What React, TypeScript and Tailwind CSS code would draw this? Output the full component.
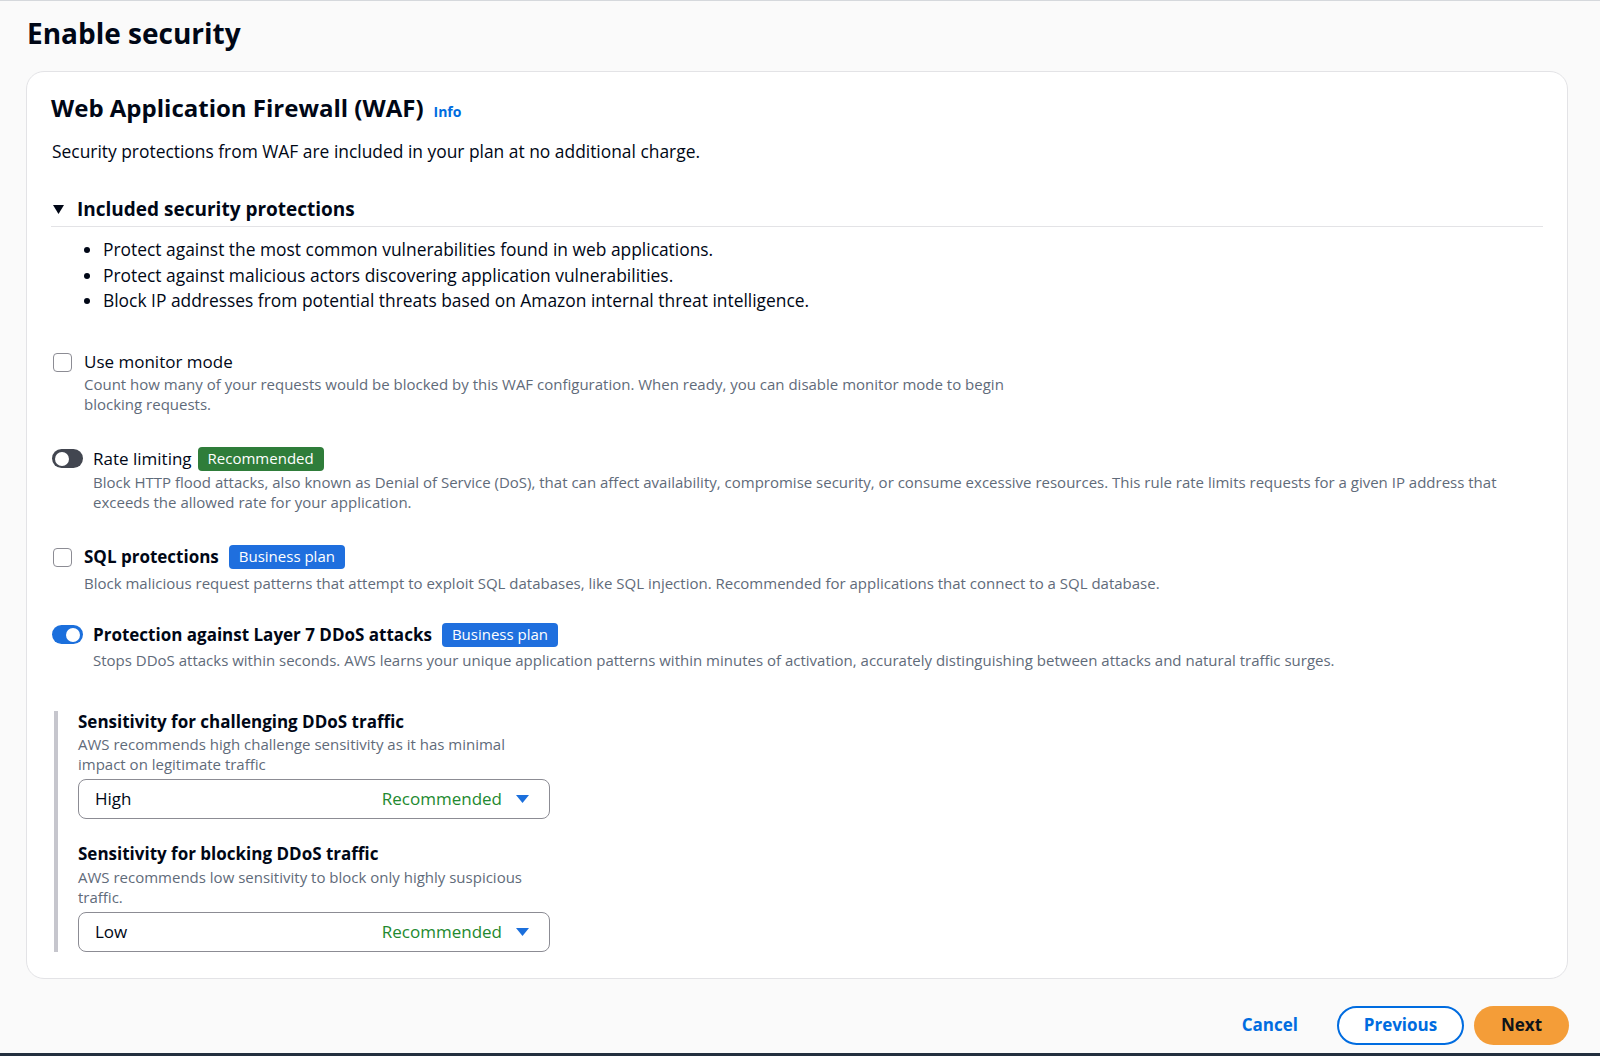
import { ReactNode } from 'react';

const font = { fontFamily: '"Open Sans", "Noto Sans", Arial, sans-serif' };

const Checkbox = () => (
    <span className="mt-[2px] w-[19px] h-[19px] flex-shrink-0 rounded-[4px] border-[1.5px] border-[#8c8c94] bg-white" />
);

const Toggle = ({ on }: { on?: boolean }) => (
    <span
        className={`w-[31px] h-[19px] flex-shrink-0 rounded-full flex items-center px-[3px] ${on ? 'bg-[#1b6fdc] justify-end' : 'bg-[#424650] justify-start'}`}
    >
        <span className="w-[14px] h-[14px] rounded-full bg-white" />
    </span>
);

const Badge = ({ children, color }: { children: ReactNode; color: 'green' | 'blue' }) => (
    <span
        className={`inline-flex items-center h-[24px] px-[10px] rounded-[4px] text-white text-[15px] font-normal leading-none ${color === 'green' ? 'bg-[#2f7d3a]' : 'bg-[#1f6fde]'}`}
    >
        {children}
    </span>
);

const Caret = () => (
    <svg width="15" height="10" viewBox="0 0 15 10">
        <path d="M1 1h13l-6.5 8z" fill="#1b6fdc" />
    </svg>
);

const SelectBox = ({ value }: { value: string }) => (
    <div className="mt-[5px] w-[472px] h-[40px] rounded-[8px] border border-[#8c8c94] bg-white flex items-center pl-[16px] pr-[19px]">
        <span className="text-[17px] text-[#000716]">{value}</span>
        <span className="ml-auto text-[17px] text-[#22892f]">Recommended</span>
        <span className="ml-[13px] flex items-center"><Caret /></span>
    </div>
);

export default function App() {
    return (
        <div className="min-h-screen w-full bg-[#fafafa] border-t border-[#d5d8dc] text-[#000716] flex flex-col" style={font}>
            {/* Page title */}
            <h1 className="ml-[27px] mt-[13px] text-[28px] leading-[38px] font-bold">Enable security</h1>

            {/* WAF card */}
            <div className="ml-[26px] mr-[32px] mt-[19px] bg-white border border-[#e3e3e6] rounded-[18px] px-[24px] pt-[19px] pb-[26px]">
                <div className="flex items-baseline gap-[10px]">
                    <h2 className="text-[24px] leading-[34px] font-bold">Web Application Firewall (WAF)</h2>
                    <a className="text-[14px] font-bold text-[#006ce0]">Info</a>
                </div>
                <p className="mt-[14px] text-[17.4px] leading-[24px] pl-[1px]">
                    Security protections from WAF are included in your plan at no additional charge.
                </p>

                {/* Expandable section */}
                <div className="mt-[34px] pb-[4px] border-b border-[#e3e3e6] flex items-center gap-[13px]">
                    <svg width="11" height="9" viewBox="0 0 11 9" className="ml-[2px]">
                        <path d="M0 0h11L5.5 9z" fill="#000716" />
                    </svg>
                    <span className="text-[19px] leading-[25px] font-bold">Included security protections</span>
                </div>
                <ul className="mt-[10px] pl-[52px] list-disc text-[17.4px] leading-[25.5px]">
                    <li>Protect against the most common vulnerabilities found in web applications.</li>
                    <li>Protect against malicious actors discovering application vulnerabilities.</li>
                    <li>Block IP addresses from potential threats based on Amazon internal threat intelligence.</li>
                </ul>

                {/* Monitor mode */}
                <div className="mt-[37px] flex gap-[12px] pl-[2px]">
                    <Checkbox />
                    <div>
                        <div className="text-[17px] leading-[22px]">Use monitor mode</div>
                        <p className="mt-[1px] max-w-[930px] text-[15px] leading-[20px] text-[#5f6b7a]">
                            Count how many of your requests would be blocked by this WAF configuration. When ready, you can disable monitor mode to begin blocking requests.
                        </p>
                    </div>
                </div>

                {/* Rate limiting */}
                <div className="mt-[33px] flex gap-[10px] pl-[1px]">
                    <span className="h-[24px] flex items-center"><Toggle /></span>
                    <div>
                        <div className="flex items-center gap-[6px] h-[24px]">
                            <span className="text-[17px]">Rate limiting</span>
                            <Badge color="green">Recommended</Badge>
                        </div>
                        <p className="mt-[1px] text-[15px] leading-[20px] text-[#5f6b7a]">
                            Block HTTP flood attacks, also known as Denial of Service (DoS), that can affect availability, compromise security, or consume excessive resources. This rule rate limits requests for a given IP address that exceeds the allowed rate for your application.
                        </p>
                    </div>
                </div>

                {/* SQL protections */}
                <div className="mt-[33px] flex gap-[12px] pl-[2px]">
                    <span className="h-[24px] flex items-center"><Checkbox /></span>
                    <div>
                        <div className="flex items-center gap-[10px] h-[24px]">
                            <span className="text-[17px] font-bold">SQL protections</span>
                            <Badge color="blue">Business plan</Badge>
                        </div>
                        <p className="mt-[4px] text-[15px] leading-[20px] text-[#5f6b7a]">
                            Block malicious request patterns that attempt to exploit SQL databases, like SQL injection. Recommended for applications that connect to a SQL database.
                        </p>
                    </div>
                </div>

                {/* Layer 7 DDoS */}
                <div className="mt-[30px] flex gap-[10px] pl-[1px]">
                    <span className="h-[24px] flex items-center"><Toggle on /></span>
                    <div>
                        <div className="flex items-center gap-[10px] h-[24px]">
                            <span className="text-[17px] font-bold">Protection against Layer 7 DDoS attacks</span>
                            <Badge color="blue">Business plan</Badge>
                        </div>
                        <p className="mt-[3px] text-[15px] leading-[20px] text-[#5f6b7a]">
                            Stops DDoS attacks within seconds. AWS learns your unique application patterns within minutes of activation, accurately distinguishing between attacks and natural traffic surges.
                        </p>
                    </div>
                </div>

                {/* DDoS sensitivity settings */}
                <div className="mt-[41px] ml-[3px] border-l-4 border-[#c6c6cd] pl-[20px]">
                    <div className="text-[17px] leading-[22px] font-bold">Sensitivity for challenging DDoS traffic</div>
                    <p className="mt-[1px] max-w-[472px] text-[15px] leading-[20px] text-[#5f6b7a]">
                        AWS recommends high challenge sensitivity as it has minimal impact on legitimate traffic
                    </p>
                    <SelectBox value="High" />

                    <div className="mt-[24px] text-[17px] leading-[22px] font-bold">Sensitivity for blocking DDoS traffic</div>
                    <p className="mt-[2px] max-w-[472px] text-[15px] leading-[20px] text-[#5f6b7a]">
                        AWS recommends low sensitivity to block only highly suspicious traffic.
                    </p>
                    <SelectBox value="Low" />
                </div>
            </div>

            {/* Footer actions */}
            <div className="mt-[27px] mr-[31px] flex justify-end items-center gap-[10px]">
                <button className="px-[20px] mr-[9px] h-[39px] text-[17px] font-bold text-[#006ce0]">Cancel</button>
                <button className="w-[127px] h-[39px] rounded-full border-2 border-[#006ce0] text-[17px] font-bold text-[#006ce0] bg-white">Previous</button>
                <button className="w-[95px] h-[39px] rounded-full bg-[#f49d38] text-[17px] font-bold text-[#0f141a]">Next</button>
            </div>

            <div className="mt-auto h-[3px] bg-[#232f3e]" />
        </div>
    );
}
